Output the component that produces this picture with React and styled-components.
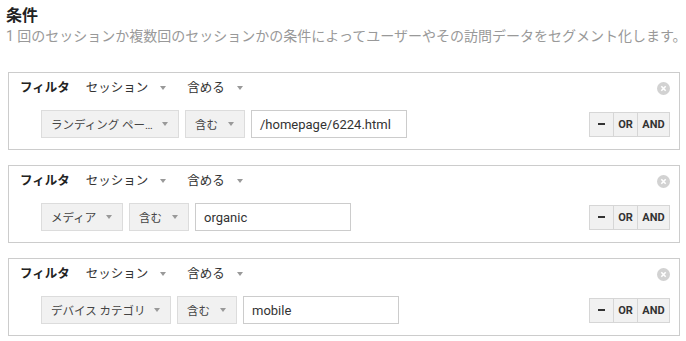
import React from "react";
import styled, { createGlobalStyle } from "styled-components";

const GlobalStyle = createGlobalStyle`
  body {
    margin: 0;
    background: #fff;
    font-family: Roboto, "Noto Sans CJK JP", sans-serif;
    color: #333;
  }
`;

const Page = styled.div`
  width: 686px;
  height: 341px;
  padding: 6px 0 0 6px;
  box-sizing: border-box;
  overflow: hidden;
`;

const Title = styled.h2`
  margin: 0;
  font-size: 16px;
  line-height: 20px;
  font-weight: bold;
  color: #222;
`;

const Subtitle = styled.p`
  margin: 0 0 26px;
  font-size: 14px;
  line-height: 20px;
  color: #999;
  white-space: nowrap;
`;

const FilterList = styled.div`
  display: flex;
  flex-direction: column;
  gap: 15px;
  margin-left: 2px;
  width: 672px;
`;

const FilterBox = styled.div`
  border: 1px solid #ccc;
  padding: 7px 9px 11px 11px;
  height: 78px;
  box-sizing: border-box;
  display: flex;
  flex-direction: column;
  gap: 14px;
`;

const HeaderRow = styled.div`
  display: flex;
  align-items: center;
  height: 16px;
  font-size: 12.5px;
  line-height: 16px;
`;

const Label = styled.span`
  font-weight: bold;
  color: #222;
  margin-right: 16px;
`;

const Menu = styled.span`
  display: flex;
  align-items: center;
  gap: 12px;
  margin-right: 21px;
  color: #333;
`;

const Caret = styled.span`
  flex-shrink: 0;
  width: 0;
  height: 0;
  border-left: 3px solid transparent;
  border-right: 3px solid transparent;
  border-top: 4px solid #999;
`;

const CloseIcon = styled.svg`
  margin-left: auto;
  width: 13px;
  height: 13px;
`;

const ConditionRow = styled.div`
  display: flex;
  align-items: center;
  height: 28px;
  margin-left: 21px;
`;

const Select = styled.div`
  display: flex;
  align-items: center;
  justify-content: space-between;
  box-sizing: border-box;
  width: ${(p) => p.width}px;
  height: 28px;
  padding: 0 10px 0 9px;
  margin-right: 6px;
  background: #f1f1f1;
  border: 1px solid #dcdcdc;
  font-size: 11.5px;
  color: #444;
  white-space: nowrap;
`;

const TextInput = styled.div`
  display: flex;
  align-items: center;
  box-sizing: border-box;
  width: 156px;
  height: 28px;
  padding-left: 8px;
  border: 1px solid #ccc;
  background: #fff;
  font-family: Roboto, sans-serif;
  font-size: 13px;
  color: #333;
`;

const ButtonGroup = styled.div`
  display: flex;
  margin-left: auto;
  height: 25px;
  border: 1px solid #d6d6d6;
  box-sizing: border-box;
`;

const GroupButton = styled.div`
  display: flex;
  align-items: center;
  justify-content: center;
  width: ${(p) => p.width}px;
  background: #f1f1f1;
  font-family: Roboto, sans-serif;
  font-size: 11px;
  font-weight: bold;
  color: #333;
  & + & {
    border-left: 1px solid #d6d6d6;
  }
`;

const Dash = styled.span`
  width: 7px;
  height: 2px;
  background: #333;
`;

const filters = [
  { field: "ランディング ペー…", fieldWidth: 138, value: "/homepage/6224.html" },
  { field: "メディア", fieldWidth: 82, value: "organic" },
  { field: "デバイス カテゴリ", fieldWidth: 130, value: "mobile" },
];

const Filter = ({ field, fieldWidth, value }) => (
  <FilterBox>
    <HeaderRow>
      <Label>フィルタ</Label>
      <Menu>
        セッション <Caret />
      </Menu>
      <Menu>
        含める <Caret />
      </Menu>
      <CloseIcon viewBox="0 0 13 13">
        <circle cx="6.5" cy="6.5" r="6.5" fill="#d2d2d2" />
        <path d="M4.3 4.3 L8.7 8.7 M8.7 4.3 L4.3 8.7" stroke="#fff" strokeWidth="1.6" />
      </CloseIcon>
    </HeaderRow>
    <ConditionRow>
      <Select width={fieldWidth}>
        {field}
        <Caret />
      </Select>
      <Select width={60}>
        含む
        <Caret />
      </Select>
      <TextInput>{value}</TextInput>
      <ButtonGroup>
        <GroupButton width={23}>
          <Dash />
        </GroupButton>
        <GroupButton width={23}>OR</GroupButton>
        <GroupButton width={31}>AND</GroupButton>
      </ButtonGroup>
    </ConditionRow>
  </FilterBox>
);

export default function App() {
  return (
    <>
      <GlobalStyle />
      <Page>
        <Title>条件</Title>
        <Subtitle>
          1 回のセッションか複数回のセッションかの条件によってユーザーやその訪問データをセグメント化します。
        </Subtitle>
        <FilterList>
          {filters.map((f, i) => (
            <Filter key={i} {...f} />
          ))}
        </FilterList>
      </Page>
    </>
  );
}
